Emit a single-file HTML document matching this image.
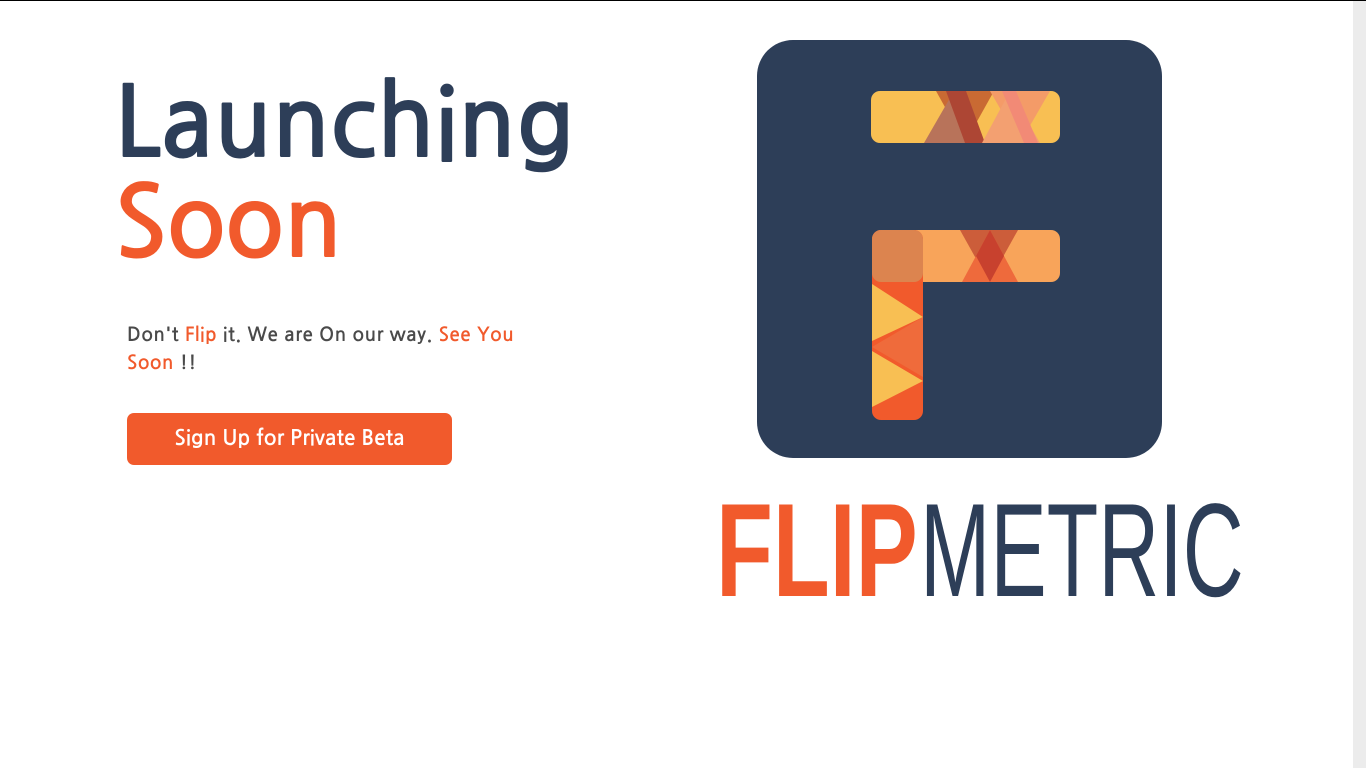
<!DOCTYPE html>
<html><head><meta charset="utf-8"><style>
html,body{margin:0;padding:0;width:1366px;height:768px;overflow:hidden;background:#fff;}
body{position:relative;font-family:"NanumGothic","Liberation Sans",sans-serif;border-top:1px solid #000;box-sizing:border-box;}
.sb{position:absolute;right:0;top:0;width:13px;height:768px;background:#ececec;}
h1{position:absolute;left:114px;top:73px;margin:0;font-weight:bold;font-size:98px;line-height:100px;color:#2d3e58;letter-spacing:-1px;}
h1 span{color:#f15a2c;}
p{position:absolute;left:127px;top:320px;margin:0;width:420px;font-size:19px;line-height:28px;color:#4a4a4a;font-weight:bold;letter-spacing:0.5px;}
p span{color:#f15a2c;}
.btn{position:absolute;left:127px;top:412px;width:325px;height:52px;background:#f15a2c;border-radius:7px;color:#fff;font-size:21px;line-height:52px;text-align:center;font-weight:bold;}
.w{position:absolute;top:470px;font-family:"Liberation Sans",sans-serif;font-size:133px;line-height:160px;transform-origin:0 0;white-space:nowrap;}
</style></head><body>
<div class="sb"></div>
<h1>Launching<br><span>Soon</span></h1>
<p>Don't <span>Flip</span> it. We are On our way. <span>See You<br>Soon</span> !!</p>
<div class="btn">Sign Up for Private Beta</div>
<svg style="position:absolute;left:0;top:0" width="1366" height="768">
<rect x="757" y="39" width="405" height="418" rx="36" fill="#2d3e58"/>
<defs>
<clipPath id="c1"><rect x="871" y="90" width="189" height="52" rx="9"/></clipPath>
<clipPath id="c2"><rect x="872" y="229" width="188" height="52" rx="9"/></clipPath>
<clipPath id="c3"><rect x="872" y="229" width="51" height="190" rx="9"/></clipPath>
</defs>
<g clip-path="url(#c1)">
<rect x="871" y="90" width="189" height="52" fill="#f8bf53"/>
<polygon points="936,90 994,90 965,142" fill="#c96a33"/>
<polygon points="954,90 924,142 984,142" fill="#b8735a"/>
<polygon points="946,90 966,90 985,142 965,142" fill="#ad4634"/>
<polygon points="990,90 1050,90 1020,142" fill="#f49b68"/>
<polygon points="1010,90 982,142 1040,142" fill="#f3a071"/>
<polygon points="1002,90 1016,90 1038,142 1024,142" fill="#f28a76"/>
</g>
<g clip-path="url(#c2)">
<rect x="872" y="229" width="188" height="52" fill="#f8a45a"/>
<polygon points="960,229 1018,229 989,281" fill="#cc5d3a"/>
<polygon points="990,229 962,281 1018,281" fill="#ee6a3c"/>
<polygon points="990,229 1004,255 990,281 976,255" fill="#c8412e"/>
</g>
<g clip-path="url(#c3)">
<rect x="872" y="229" width="51" height="190" fill="#f15a2c"/>
<polygon points="872,283 923,316 872,340" fill="#f8bf53"/>
<polygon points="923,316 872,346 923,376" fill="#ef6b3b"/>
<polygon points="872,350 923,380 872,406" fill="#f8bf53"/>
<rect x="872" y="229" width="51" height="52" rx="9" fill="#dc844f"/>
</g>
</svg>
<div class="w" style="left:716px;font-weight:bold;color:#f15a2c;transform:scaleX(0.70);">FLIP</div>
<div class="w" style="left:920px;color:#2d3e58;transform:scaleX(0.635);">METRIC</div>
</body></html>
